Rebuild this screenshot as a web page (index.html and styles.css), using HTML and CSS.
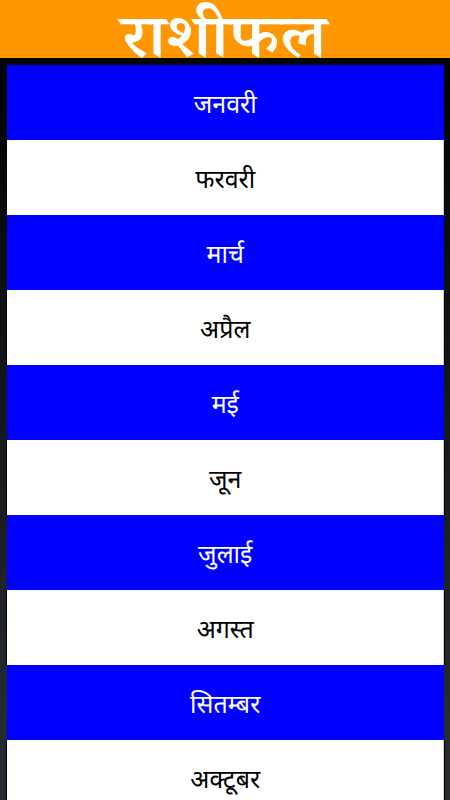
FILE: index.html
```html
<!DOCTYPE html>
<html lang="hi">
<head>
    <meta charset="UTF-8">
    <meta name="viewport" content="width=device-width, initial-scale=1.0">
    <title>राशीफल</title>
    <link rel="stylesheet" href="styles.css">
</head>
<body>

<header>
    <h1>राशीफल</h1>
</header>

<ul class="months">
    <li>जनवरी</li>
    <li>फरवरी</li>
    <li>मार्च</li>
    <li>अप्रैल</li>
    <li>मई</li>
    <li>जून</li>
    <li>जुलाई</li>
    <li>अगस्त</li>
    <li>सितम्बर</li>
    <li>अक्टूबर</li>
</ul>

</body>
</html>
```

FILE: styles.css
```css
body {
    margin: 0;
    height: 800px;
    overflow: hidden;
    background: linear-gradient(#020303 10%, #14181a 50%, #262b30 90%);
    font-family: "Noto Sans", "Noto Sans Devanagari", sans-serif;
}
header {
    height: 58px;
    background-color: #ff9800;
    color: white;
    text-align: center;
}
h1 {
    margin: 0 auto;
    width: fit-content;
    font-family: "Noto Serif Devanagari", "Noto Sans", sans-serif;
    font-size: 60px;
    line-height: 96px;
    height: 58px;
    font-weight: 600;
    transform: translateX(-1px) scaleX(1.13);
}
.months {
    list-style: none;
    margin: 0;
    padding: 7px 6px 0 7px;
}
.months li {
    box-sizing: border-box;
    height: 75px;
    padding: 1px 0.5px 0 0;
    line-height: 75px;
    font-size: 25px;
    text-align: center;
    background-color: white;
    color: black;
}
.months li:nth-child(odd) {
    background-color: #0000ff;
    color: white;
}
.months li:nth-child(even) {
    box-shadow: inset -1px 0 #ccc, 1px 0 #000, -1px 0 #000;
}
```
